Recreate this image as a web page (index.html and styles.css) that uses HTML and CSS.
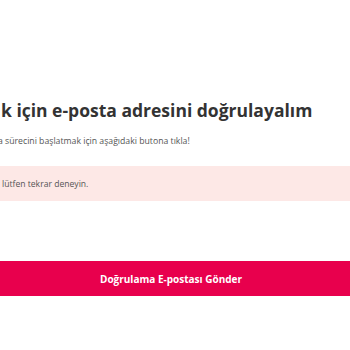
FILE: index.html
```html
<!DOCTYPE html>
<html lang="tr">
<head>
<meta charset="utf-8">
<link rel="stylesheet" href="styles.css">
</head>
<body>
<main class="page">
  <h1 class="title">k için e-posta adresini doğrulayalım</h1>
  <p class="lead">a sürecini başlatmak için aşağıdaki butona tıkla!</p>
  <div class="alert">lütfen tekrar deneyin.</div>
  <button class="send">Doğrulama E-postası Gönder</button>
</main>
</body>
</html>
```
FILE: styles.css
```css
html, body {
  margin: 0;
  padding: 0;
  background: #ffffff;
}
.page {
  display: flex;
  flex-direction: column;
  font-family: "Open Sans", "Noto Sans", sans-serif;
  padding-top: 97px;
  overflow: hidden;
}
.title {
  margin: 0;
  font-size: 17.5px;
  font-weight: 700;
  line-height: 26px;
  color: #333333;
  padding-left: 1px;
  white-space: nowrap;
}
.lead {
  margin: 12px 0 0 -2px;
  font-size: 8.7px;
  line-height: 12px;
  color: #555555;
  white-space: nowrap;
}
.alert {
  margin-top: 19px;
  height: 35px;
  display: flex;
  align-items: center;
  padding-left: 2px;
  background: #fde8e6;
  color: #555555;
  font-size: 8.6px;
  white-space: nowrap;
}
.send {
  margin-top: 60px;
  height: 35px;
  border: 0;
  padding: 0 8px 0 0;
  background: #e8004d;
  color: #ffffff;
  font-family: "Open Sans", "Noto Sans", sans-serif;
  font-weight: 700;
  font-size: 10px;
  text-align: center;
}
```
